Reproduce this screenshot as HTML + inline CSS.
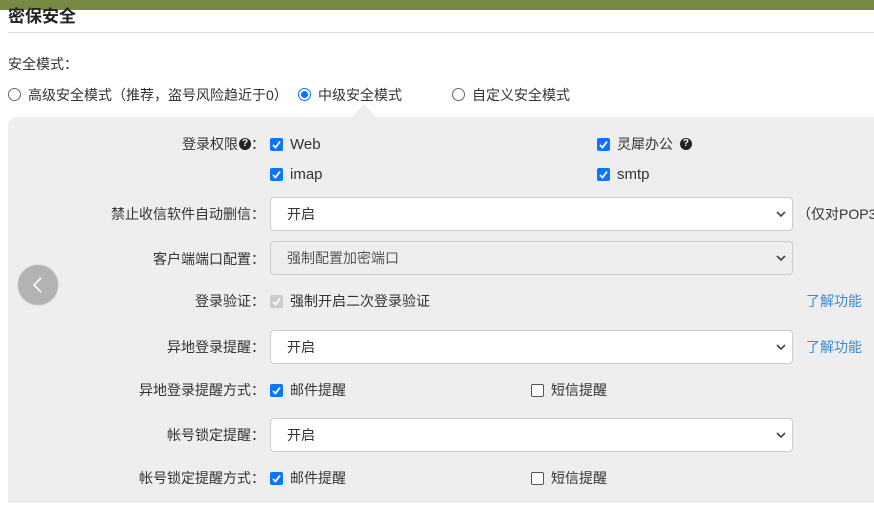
<!DOCTYPE html>
<html><head><meta charset="utf-8"><style>
*{box-sizing:border-box;margin:0;padding:0}
body{width:874px;height:516px;overflow:hidden;background:#fff;font-family:"Liberation Sans","Noto Sans CJK SC",sans-serif;font-size:14px;color:#333;position:relative}
.a{position:absolute;white-space:nowrap}
.top{left:0;top:0;width:874px;height:10px;background:#788944}
.title{left:8px;top:5px;font-size:17px;font-weight:bold;color:#222;line-height:24px}
.hr{left:8px;top:32px;width:866px;height:1px;background:#ddd}
.panel{left:8px;top:117px;width:866px;height:386px;background:#eee;border-radius:8px 0 0 0}
.notch{left:352px;top:104px;width:0;height:0;border-left:12px solid transparent;border-right:12px solid transparent;border-bottom:13px solid #eee}
.radio{width:13px;height:13px;border:1px solid #666;border-radius:50%;background:#fff}
.radio.on{border:1px solid #0a75ff;background:#fff}
.radio.on:after{content:"";position:absolute;left:2px;top:2px;width:7px;height:7px;border-radius:50%;background:#0a75ff}
.cb{width:13px;height:13px;border-radius:2px;background:#0a75ff}
.cb svg{position:absolute;left:1px;top:1px}
.cbo{width:13px;height:13px;border:1px solid #555;border-radius:2px;background:#fff}
.cbd{width:13px;height:13px;border-radius:2px;background:#ccc}
.lbl{right:609px;line-height:20px;text-align:right}
.lbl i{font-style:normal;display:inline-block;width:14px;text-align:center}
.sel{left:270px;width:523px;height:34px;border:1px solid #ccc;border-radius:4px;background:#fff;padding-left:16px;line-height:32px}
.sel.dis{background:#eee}
.sel svg{position:absolute;right:6px;top:13px}
.link{color:#3a8ad6}
.q{display:inline-block;width:12px;height:12px;border-radius:50%;background:#222;color:#fff;font-size:10px;font-weight:bold;text-align:center;line-height:12px;vertical-align:middle;position:relative;top:-1px}
.back{left:17px;top:264px;width:42px;height:42px;border-radius:50%;background:#b3b3b5;border:1px solid #ddd}
.t15{font-size:15px;line-height:20px}
</style></head><body>
<div class="a top"></div>
<div class="a title" style="top:5px">密保安全</div>
<div class="a hr"></div>
<div class="a" style="left:8px;top:54px;line-height:20px">安全模式：</div>
<div class="a radio" style="left:8px;top:88px"></div>
<div class="a" style="left:28px;top:85px;line-height:20px">高级安全模式（推荐，盗号风险趋近于0）</div>
<div class="a radio on" style="left:298px;top:88px"></div>
<div class="a" style="left:318px;top:85px;line-height:20px">中级安全模式</div>
<div class="a radio" style="left:452px;top:88px"></div>
<div class="a" style="left:472px;top:85px;line-height:20px">自定义安全模式</div>
<div class="a panel"></div>
<div class="a notch"></div>
<div class="a back"><svg width="42" height="42" style="position:absolute;left:-1px;top:-1px"><path d="M24 14 L17 21 L24 28" stroke="#fff" stroke-width="1.6" fill="none"/></svg></div>

<div class="a lbl" style="top:134px">登录权限<span class="q" style="margin-left:1px">?</span><i>：</i></div>
<div class="a cb" style="left:270px;top:138px"><svg width="11" height="11"><path d="M2 6 L4.5 8.5 L9 2.5" stroke="#fff" stroke-width="1.8" fill="none"/></svg></div>
<div class="a t15" style="left:290px;top:135px">Web</div>
<div class="a cb" style="left:597px;top:138px"><svg width="11" height="11"><path d="M2 6 L4.5 8.5 L9 2.5" stroke="#fff" stroke-width="1.8" fill="none"/></svg></div>
<div class="a" style="left:617px;top:134px;line-height:20px">灵犀办公 <span class="q" style="margin-left:3px">?</span></div>
<div class="a cb" style="left:270px;top:168px"><svg width="11" height="11"><path d="M2 6 L4.5 8.5 L9 2.5" stroke="#fff" stroke-width="1.8" fill="none"/></svg></div>
<div class="a t15" style="left:290px;top:165px">imap</div>
<div class="a cb" style="left:597px;top:168px"><svg width="11" height="11"><path d="M2 6 L4.5 8.5 L9 2.5" stroke="#fff" stroke-width="1.8" fill="none"/></svg></div>
<div class="a t15" style="left:617px;top:165px">smtp</div>

<div class="a lbl" style="top:204px">禁止收信软件自动删信<i>：</i></div>
<div class="a sel" style="top:197px">开启<svg width="10" height="7"><path d="M1 1 L5 5 L9 1" stroke="#444" stroke-width="1.6" fill="none"/></svg></div>
<div class="a" style="left:797px;top:204px;line-height:20px;width:77px;overflow:hidden">（仅对POP3有效）</div>

<div class="a lbl" style="top:249px">客户端端口配置<i>：</i></div>
<div class="a sel dis" style="top:241px;color:#555">强制配置加密端口<svg width="10" height="7"><path d="M1 1 L5 5 L9 1" stroke="#444" stroke-width="1.6" fill="none"/></svg></div>

<div class="a lbl" style="top:291px">登录验证<i>：</i></div>
<div class="a cbd" style="left:270px;top:295px"><svg width="11" height="11" style="position:absolute;left:1px;top:1px"><path d="M2 6 L4.5 8.5 L9 2.5" stroke="#fff" stroke-width="1.6" fill="none"/></svg></div>
<div class="a" style="left:290px;top:291px;line-height:20px">强制开启二次登录验证</div>
<div class="a link" style="left:806px;top:291px;line-height:20px">了解功能</div>

<div class="a lbl" style="top:337px">异地登录提醒<i>：</i></div>
<div class="a sel" style="top:330px">开启<svg width="10" height="7"><path d="M1 1 L5 5 L9 1" stroke="#444" stroke-width="1.6" fill="none"/></svg></div>
<div class="a link" style="left:806px;top:337px;line-height:20px">了解功能</div>

<div class="a lbl" style="top:380px">异地登录提醒方式<i>：</i></div>
<div class="a cb" style="left:270px;top:384px"><svg width="11" height="11"><path d="M2 6 L4.5 8.5 L9 2.5" stroke="#fff" stroke-width="1.8" fill="none"/></svg></div>
<div class="a" style="left:290px;top:380px;line-height:20px">邮件提醒</div>
<div class="a cbo" style="left:531px;top:384px"></div>
<div class="a" style="left:551px;top:380px;line-height:20px">短信提醒</div>

<div class="a lbl" style="top:425px">帐号锁定提醒<i>：</i></div>
<div class="a sel" style="top:418px">开启<svg width="10" height="7"><path d="M1 1 L5 5 L9 1" stroke="#444" stroke-width="1.6" fill="none"/></svg></div>

<div class="a lbl" style="top:468px">帐号锁定提醒方式<i>：</i></div>
<div class="a cb" style="left:270px;top:472px"><svg width="11" height="11"><path d="M2 6 L4.5 8.5 L9 2.5" stroke="#fff" stroke-width="1.8" fill="none"/></svg></div>
<div class="a" style="left:290px;top:468px;line-height:20px">邮件提醒</div>
<div class="a cbo" style="left:531px;top:472px"></div>
<div class="a" style="left:551px;top:468px;line-height:20px">短信提醒</div>
</body></html>
